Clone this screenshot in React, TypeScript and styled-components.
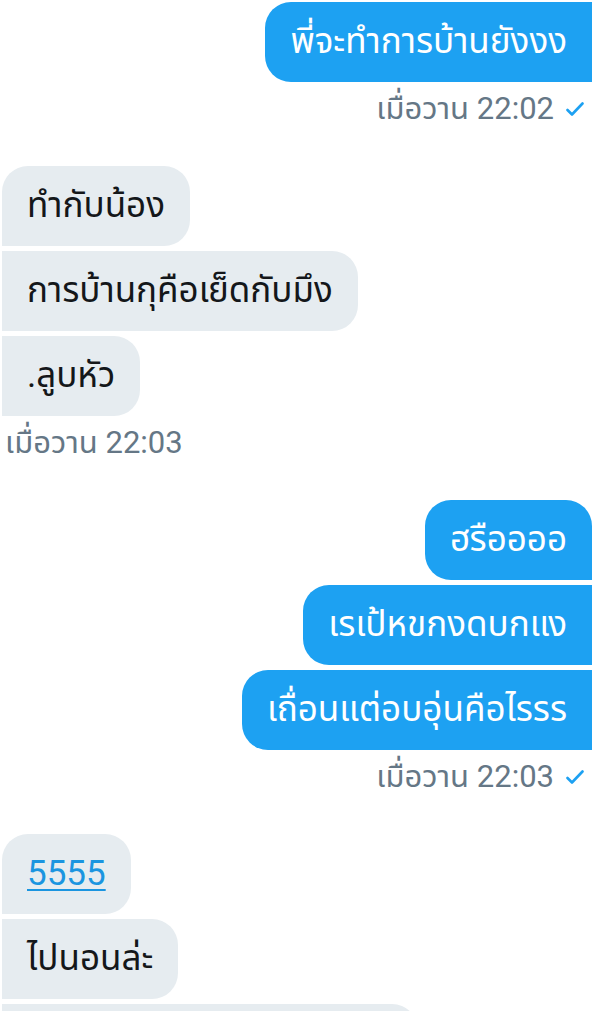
import React from "react";
import styled, { createGlobalStyle } from "styled-components";

const GlobalStyle = createGlobalStyle`
  html, body {
    margin: 0;
    padding: 0;
    background: #ffffff;
    overflow: hidden;
  }
  body {
    font-family: Roboto, "Noto Sans Thai", "Noto Sans Thai UI", "Noto Sans", sans-serif;
  }
`;

type Side = "in" | "out";

const Screen = styled.main`
  width: 616px;
  height: 1011px;
  overflow: hidden;
  box-sizing: border-box;
  padding: 2px 24px 0 2px;
  display: flex;
  flex-direction: column;
`;

const Group = styled.section<{ $side: Side }>`
  display: flex;
  flex-direction: column;
  gap: 5px;
  align-items: ${(p) => (p.$side === "out" ? "flex-end" : "flex-start")};
  margin-bottom: 39px;
`;

const Bubble = styled.div<{ $side: Side; $first?: boolean; $width?: number }>`
  box-sizing: border-box;
  height: 80px;
  display: flex;
  align-items: center;
  padding: 0 25px;
  font-size: 35px;
  line-height: 44px;
  white-space: nowrap;
  ${(p) => (p.$width ? `width: ${p.$width}px;` : "")}
  background: ${(p) => (p.$side === "out" ? "#1da1f2" : "#e6ecf0")};
  color: ${(p) => (p.$side === "out" ? "#ffffff" : "#14171a")};
  border-radius: ${(p) =>
    p.$side === "out"
      ? `26px ${p.$first ? "26px" : "0"} 0 26px`
      : `${p.$first ? "26px" : "0"} 26px 26px 0`};
`;

const Link = styled.a`
  color: #1b95e0;
  text-decoration: underline;
  text-underline-offset: 4px;
  text-decoration-thickness: 2px;
`;

const Meta = styled.div<{ $side: Side }>`
  height: 36px;
  margin-top: 4px;
  display: flex;
  align-items: center;
  gap: 12px;
  font-size: 31px;
  color: #657786;
  padding: ${(p) => (p.$side === "out" ? "0 8px 0 0" : "0 0 0 3px")};
`;

const Check = () => (
  <svg width="18" height="15" viewBox="0 0 18 15" aria-hidden="true">
    <polyline
      points="1.5,8 6,12.5 16.5,1.5"
      fill="none"
      stroke="#1da1f2"
      strokeWidth="2.6"
      strokeLinecap="round"
      strokeLinejoin="round"
    />
  </svg>
);

export default function App() {
  return (
    <>
      <GlobalStyle />
      <Screen>
        <Group $side="out">
          <Bubble $side="out">พี่จะทำการบ้านยังงง</Bubble>
          <Meta $side="out">
            เมื่อวาน 22:02
            <Check />
          </Meta>
        </Group>

        <Group $side="in">
          <Bubble $side="in" $first>ทำกับน้อง</Bubble>
          <Bubble $side="in">การบ้านกุคือเย็ดกับมึง</Bubble>
          <Bubble $side="in">.ลูบหัว</Bubble>
          <Meta $side="in">เมื่อวาน 22:03</Meta>
        </Group>

        <Group $side="out">
          <Bubble $side="out" $first>ฮรืออออ</Bubble>
          <Bubble $side="out">เรเป้หขกงดบกแง</Bubble>
          <Bubble $side="out">เถื่อนแต่อบอุ่นคือไรรร</Bubble>
          <Meta $side="out">
            เมื่อวาน 22:03
            <Check />
          </Meta>
        </Group>

        <Group $side="in">
          <Bubble $side="in" $first>
            <Link href="#">5555</Link>
          </Bubble>
          <Bubble $side="in">ไปนอนล่ะ</Bubble>
          <Bubble $side="in" $width={416} />
        </Group>
      </Screen>
    </>
  );
}
